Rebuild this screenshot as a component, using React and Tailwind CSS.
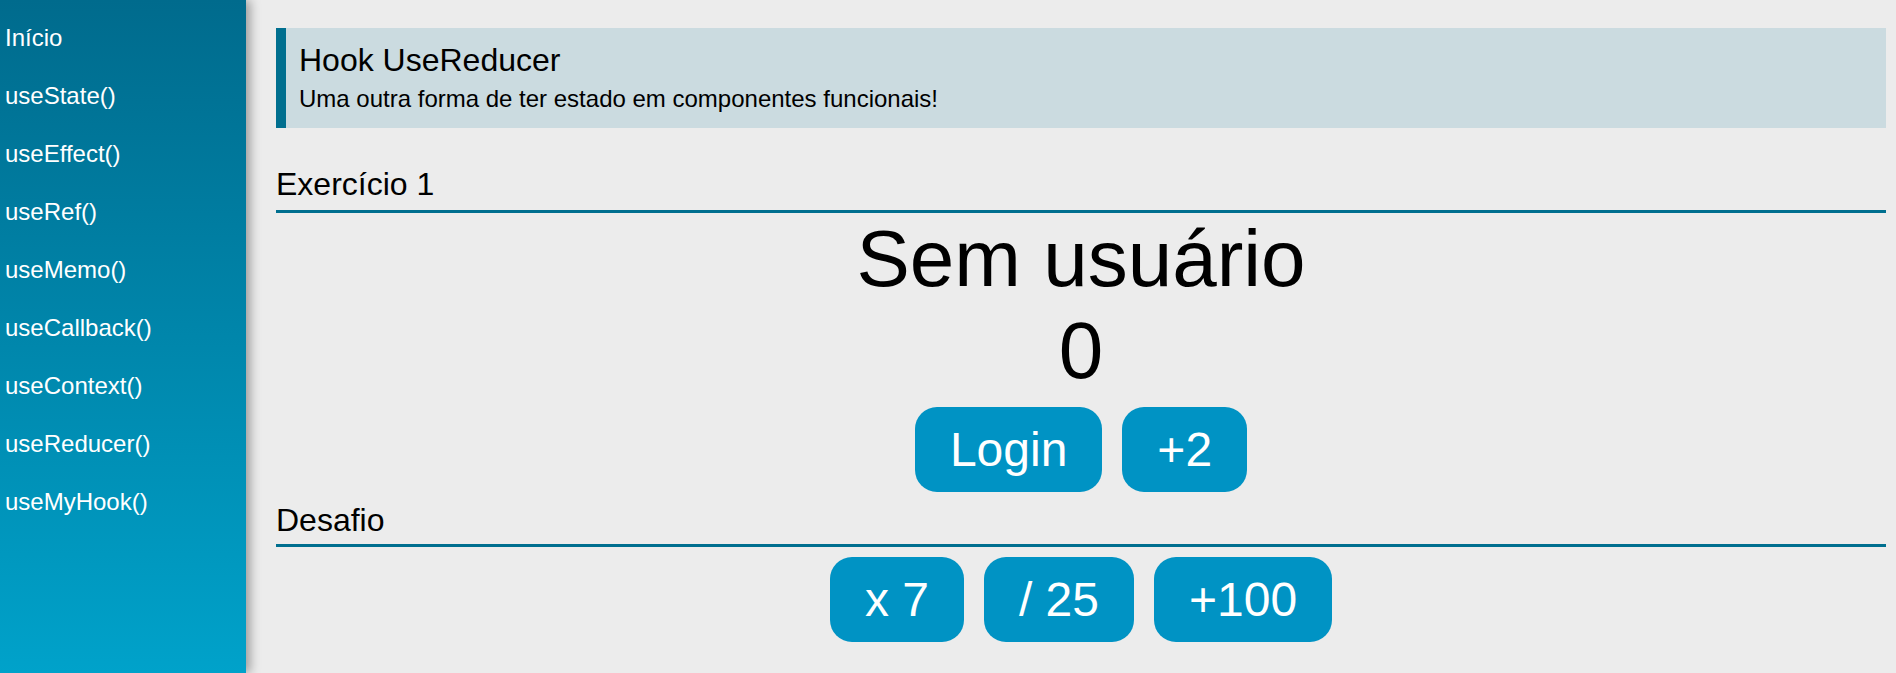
import React from "react";

const navItems = [
  "Início",
  "useState()",
  "useEffect()",
  "useRef()",
  "useMemo()",
  "useCallback()",
  "useContext()",
  "useReducer()",
  "useMyHook()",
];

function Btn({ children }) {
  return (
    <button className="m-[10px] rounded-[22px] bg-[#0093c4] px-[35px] py-[15px] text-[48px] leading-[55px] text-white">
      {children}
    </button>
  );
}

function SectionTitle({ children, className = "" }) {
  return (
    <div
      className={
        "border-b-[3px] border-[#006f8f] text-[32px] leading-[37px] text-black " +
        className
      }
    >
      {children}
    </div>
  );
}

export default function App() {
  return (
    <div
      className="flex min-h-screen bg-[#ececec]"
      style={{ fontFamily: '"Liberation Sans", Arial, sans-serif' }}
    >
      <aside className="relative z-10 w-[246px] shrink-0 bg-gradient-to-b from-[#006b8d] to-[#00a2ca] pt-[9px] shadow-[4px_0_10px_rgba(0,0,0,0.35)]">
        <nav className="flex flex-col">
          {navItems.map((item) => (
            <a
              key={item}
              href="#"
              className="h-[58px] pl-[5px] text-[24px] leading-[58px] text-white"
            >
              {item}
            </a>
          ))}
        </nav>
      </aside>
      <main className="flex-1 pl-[30px] pr-[10px] pt-[28px]">
        <div className="h-[100px] border-l-[10px] border-[#006f8f] bg-[#cbdbe0] pl-[13px] pt-[14px]">
          <div className="text-[32px] leading-[37px] text-black">Hook UseReducer</div>
          <div className="mt-[6px] text-[24px] leading-[28px] text-black">
            Uma outra forma de ter estado em componentes funcionais!
          </div>
        </div>

        <SectionTitle className="mt-[38px] pb-[7px]">Exercício 1</SectionTitle>
        <div className="flex flex-col items-center">
          <span className="text-[80px] leading-[92px] text-black">Sem usuário</span>
          <span className="text-[80px] leading-[92px] text-black">0</span>
          <div className="flex justify-center">
            <Btn>Login</Btn>
            <Btn>+2</Btn>
          </div>
        </div>

        <SectionTitle className="pb-[5px]">Desafio</SectionTitle>
        <div className="flex justify-center">
          <Btn>x 7</Btn>
          <Btn>/ 25</Btn>
          <Btn>+100</Btn>
        </div>
      </main>
    </div>
  );
}
